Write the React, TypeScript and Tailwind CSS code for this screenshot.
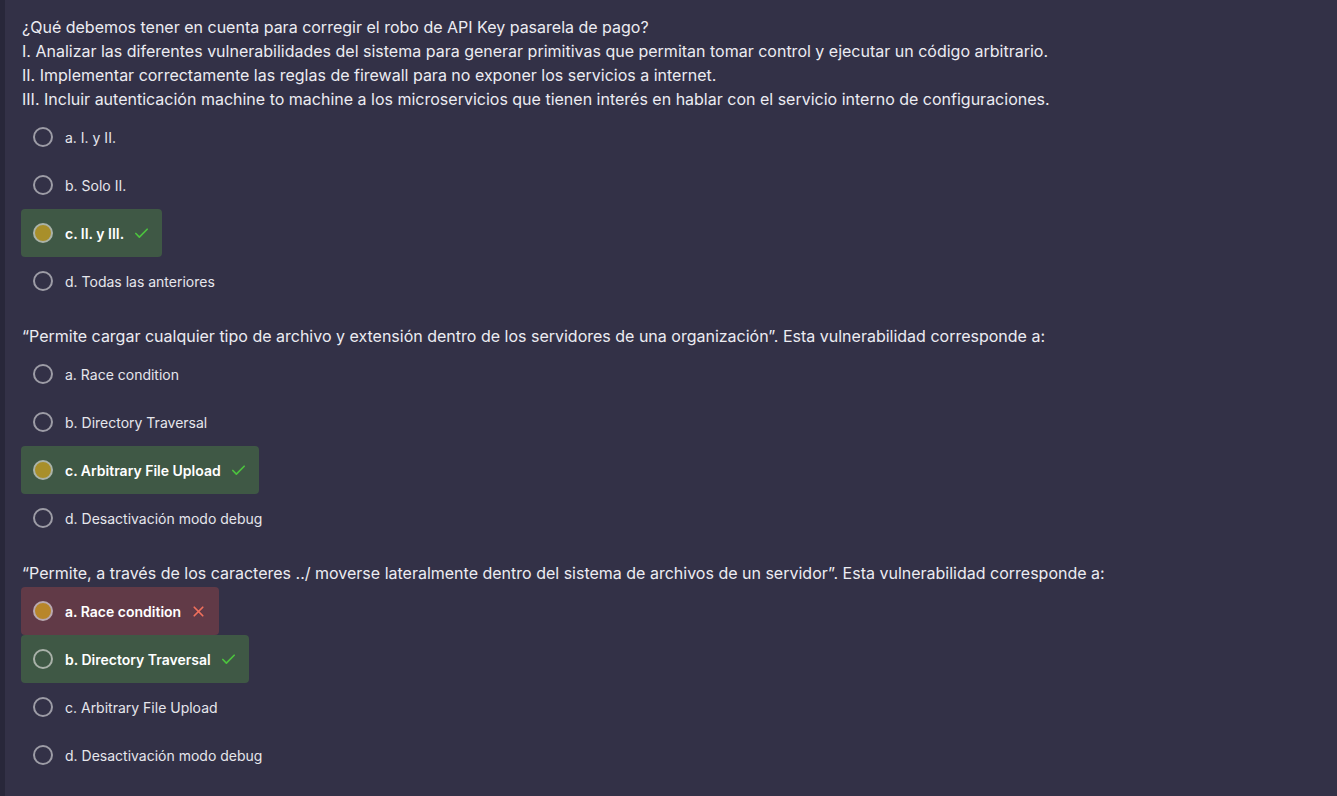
import { Check, X } from "lucide-react";

type Opt = { label: string; state?: "right" | "wrong" | "answer" };

const questions: { lines: string[]; options: Opt[] }[] = [
  {
    lines: [
      "¿Qué debemos tener en cuenta para corregir el robo de API Key pasarela de pago?",
      "I. Analizar las diferentes vulnerabilidades del sistema para generar primitivas que permitan tomar control y ejecutar un código arbitrario.",
      "II. Implementar correctamente las reglas de firewall para no exponer los servicios a internet.",
      "III. Incluir autenticación machine to machine a los microservicios que tienen interés en hablar con el servicio interno de configuraciones.",
    ],
    options: [
      { label: "a. I. y II." },
      { label: "b. Solo II." },
      { label: "c. II. y III.", state: "right" },
      { label: "d. Todas las anteriores" },
    ],
  },
  {
    lines: [
      "“Permite cargar cualquier tipo de archivo y extensión dentro de los servidores de una organización”. Esta vulnerabilidad corresponde a:",
    ],
    options: [
      { label: "a. Race condition" },
      { label: "b. Directory Traversal" },
      { label: "c. Arbitrary File Upload", state: "right" },
      { label: "d. Desactivación modo debug" },
    ],
  },
  {
    lines: [
      "“Permite, a través de los caracteres ../ moverse lateralmente dentro del sistema de archivos de un servidor”. Esta vulnerabilidad corresponde a:",
    ],
    options: [
      { label: "a. Race condition", state: "wrong" },
      { label: "b. Directory Traversal", state: "answer" },
      { label: "c. Arbitrary File Upload" },
      { label: "d. Desactivación modo debug" },
    ],
  },
];

function Option({ opt }: { opt: Opt }) {
  const boxed = !!opt.state;
  const box =
    opt.state === "wrong"
      ? "bg-[#613a47]"
      : boxed
        ? "bg-[#3f5845]"
        : "";
  const dot =
    opt.state === "wrong"
      ? "bg-[#b8862a] border-[#b9a9b0]"
      : opt.state === "right"
        ? "bg-[#a88f2a] border-[#aab3a8]"
        : boxed
          ? "border-[#a9b1a9]"
          : "border-[#9d9ca6]";
  return (
    <div>
      <div
        className={`inline-flex h-[48px] items-center rounded-[4px] pl-[12px] pr-[12px] ${box}`}
      >
        <span className={`size-[20px] rounded-full border-[2.5px] ${dot}`} />
        <span
          className={`ml-[12px] text-[14px] ${boxed ? "font-[560] text-white" : "text-[#e6e6ec]"}`}
        >
          {opt.label}
        </span>
        {opt.state === "wrong" ? (
          <X className="ml-[9px] size-[17px] text-[#f0705c]" strokeWidth={2.4} />
        ) : boxed ? (
          <Check className="ml-[9px] size-[17px] text-[#4cc23e]" strokeWidth={2.4} />
        ) : null}
      </div>
    </div>
  );
}

export default function App() {
  return (
    <div
      className="min-h-[796px] w-full border-l-[5px] border-[#28273a] bg-[#333147] pl-[16px] pt-[15px] text-[#ececf2]"
      style={{ fontFamily: "Inter, 'Noto Sans', sans-serif" }}
    >
      {questions.map((q, i) => (
        <section key={i} className="mb-[19px]">
          {q.lines.map((l) => (
            <p key={l} className="pl-[1px] text-[16px] leading-[24px]">
              {l}
            </p>
          ))}
          <div className="mt-[2px]">
            {q.options.map((o) => (
              <Option key={o.label} opt={o} />
            ))}
          </div>
        </section>
      ))}
    </div>
  );
}
